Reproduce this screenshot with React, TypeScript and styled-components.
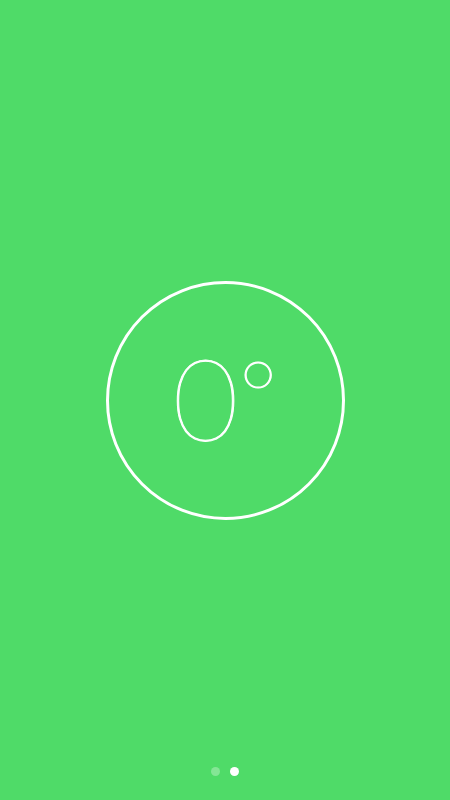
import React from "react";
import styled, { createGlobalStyle } from "styled-components";

const GlobalStyle = createGlobalStyle`
  html, body { margin: 0; padding: 0; background: #4fdb68; }
  * { box-sizing: border-box; }
`;

const Screen = styled.div`
  width: 450px;
  height: 800px;
  background: #4fdb68;
  display: flex;
  flex-direction: column;
  font-family: Lato, "Noto Sans", sans-serif;
  color: #fff;
`;

const Stage = styled.div`
  flex: 1;
  display: flex;
  align-items: center;
  justify-content: center;
  padding-top: 33px;
`;

const Dial = styled.div`
  width: 239px;
  height: 239px;
  border: 3px solid #fff;
  border-radius: 50%;
  display: flex;
  align-items: center;
  justify-content: center;
`;

const Reading = styled.div`
  display: flex;
  align-items: flex-start;
  font-weight: 100;
  font-size: 114px;
  line-height: 1;
  -webkit-text-stroke: 1px #fff;
  margin-top: -6px;
`;

const Degree = styled.span`
  font-size: 94px;
  margin-left: 0px;
  margin-top: 6px;
`;

const Pager = styled.div`
  display: flex;
  justify-content: center;
  gap: 10px;
  padding-bottom: 24px;
`;

const Dot = styled.span<{ $active?: boolean }>`
  width: 9px;
  height: 9px;
  border-radius: 50%;
  background: ${(p) => (p.$active ? "#fff" : "rgba(255,255,255,0.3)")};
`;

export default function App() {
  return (
    <>
      <GlobalStyle />
      <Screen>
        <Stage>
          <Dial>
            <Reading>
              0<Degree>°</Degree>
            </Reading>
          </Dial>
        </Stage>
        <Pager>
          <Dot />
          <Dot $active />
        </Pager>
      </Screen>
    </>
  );
}
